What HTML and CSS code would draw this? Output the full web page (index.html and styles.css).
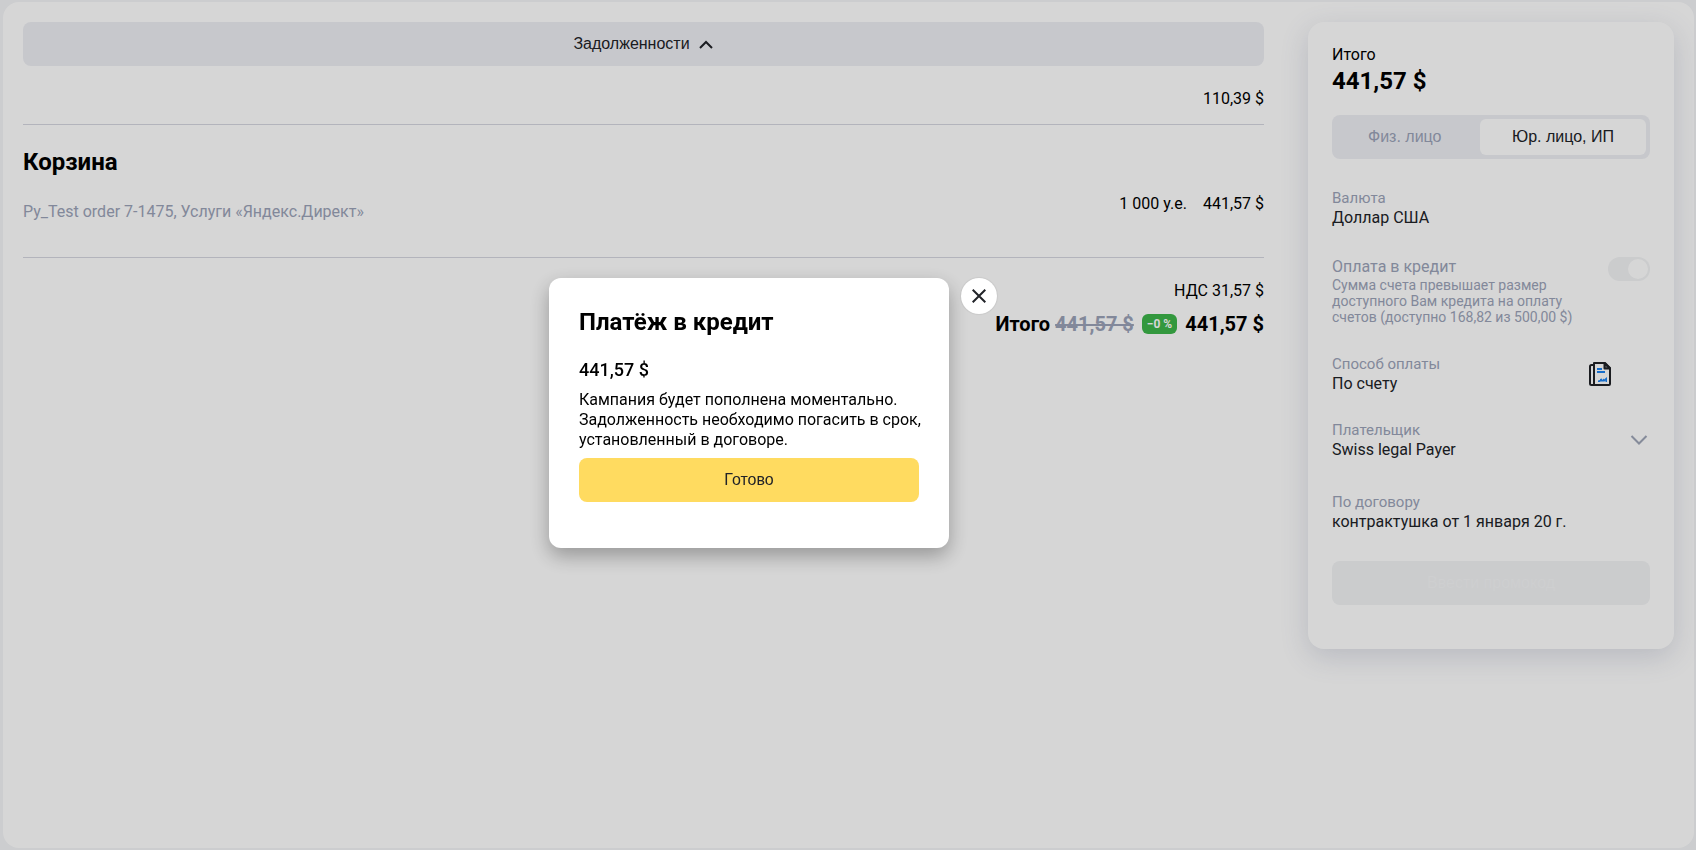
FILE: index.html
```html
<!DOCTYPE html>
<html lang="ru">
<head>
<meta charset="utf-8">
<title>Корзина</title>
<link rel="stylesheet" href="styles.css">
</head>
<body>
<div class="page">
  <main class="cart">
    <button class="debts" type="button">
      <span>Задолженности</span>
      <svg class="debts-icon" width="16" height="16" viewBox="0 0 16 16" fill="none" stroke="currentColor" stroke-width="2"><path d="M2 12l6-6 6 6"/></svg>
    </button>
    <div class="debt-sum">110,39&nbsp;$</div>
    <h1 class="title">Корзина</h1>
    <div class="item">
      <div class="item-name">Py_Test order 7-1475, Услуги «Яндекс.Директ»</div>
      <div class="item-prices"><span>1&nbsp;000&nbsp;у.е.</span><span>441,57&nbsp;$</span></div>
    </div>
    <div class="vat">НДС 31,57&nbsp;$</div>
    <div class="total">
      <span>Итого <s class="old">441,57&nbsp;$</s></span>
      <span class="badge">−0&nbsp;%</span>
      <span>441,57&nbsp;$</span>
    </div>
  </main>

  <aside class="card">
    <div class="card-label">Итого</div>
    <div class="card-sum">441,57&nbsp;$</div>
    <div class="segments" role="radiogroup" aria-label="Тип плательщика">
      <label class="segment"><input class="hidden-radio" type="radio" name="person">Физ. лицо</label>
      <label class="segment segment-active"><input class="hidden-radio" type="radio" name="person" checked>Юр. лицо, ИП</label>
    </div>
    <div class="field">
      <div class="field-label">Валюта</div>
      <div class="field-value">Доллар США</div>
    </div>
    <div class="field credit">
      <div>
        <label class="credit-label" for="credit">Оплата в кредит</label>
        <div class="credit-note">Сумма счета превышает размер доступного Вам кредита на оплату счетов (доступно 168,82 из 500,00&nbsp;$)</div>
      </div>
      <input class="switch" id="credit" type="checkbox" checked disabled>
    </div>
    <div class="field field-row">
      <div>
        <div class="field-label">Способ оплаты</div>
        <div class="field-value">По счету</div>
      </div>
      <svg class="invoice" width="24" height="24" viewBox="0 0 24 24" fill="none" stroke="#212328" stroke-width="2" stroke-linejoin="round">
        <path d="M6 3H3.500Q2 3 2 4.500V21.500Q2 23 3.500 23H7"/>
        <path d="M6 1H17L22 6V22Q22 23 21 23H6Z"/>
        <path d="M16.500 1V6.500H22Z" fill="#777b82"/>
        <path d="M9 7H14M9 10H17" stroke="#1c84f2"/>
        <path d="M10 20V18.500L12 18V17L14 16.500V18L16 16.500V17.500L19 15V20H17.500V18.500L16.500 19.500H12.500L11.500 20Z" fill="#1c84f2" stroke="none"/>
      </svg>
    </div>
    <div class="field field-row payer">
      <div>
        <div class="field-label">Плательщик</div>
        <div class="field-value">Swiss legal Payer</div>
      </div>
      <svg class="chevron" width="20" height="20" viewBox="0 0 20 20" fill="none" stroke="#9fa6b8" stroke-width="2"><path d="M2.500 6l7.500 7.500L17.500 6"/></svg>
    </div>
    <div class="field contract">
      <div class="field-label">По договору</div>
      <div class="field-value">контрактушка от 1 января 20 г.</div>
    </div>
    <button class="promo" type="button" disabled>Ввести промокод</button>
  </aside>
</div>

<div class="overlay">
  <section class="modal" role="dialog" aria-labelledby="modal-title">
    <h2 class="modal-title" id="modal-title">Платёж в кредит</h2>
    <div class="modal-sum">441,57&nbsp;$</div>
    <p class="modal-text">Кампания будет пополнена моментально.<br>Задолженность необходимо погасить в срок,<br>установленный в договоре.</p>
    <button class="done" type="button">Готово</button>
  </section>
  <button class="close" type="button" aria-label="Закрыть">
    <svg width="14" height="14" viewBox="0 0 14 14" fill="none" stroke="#212328" stroke-width="2"><path d="M.700 .700l12.600 12.600M13.300 .700L.700 13.300"/></svg>
  </button>
</div>
</body>
</html>
```
FILE: styles.css
```css
* { box-sizing: border-box; }

body {
  display: flex;
  min-height: 100vh;
  margin: 0;
  padding: 2px 2px 2px 3px;
  background: #f4f5f7;
  color: #000;
  font: 16px/20px Roboto, "Noto Sans", sans-serif;
}

button {
  border: 0;
  border-radius: 8px;
  color: #212328;
  font: 16px/20px "Liberation Sans", Arial, sans-serif;
}

.page {
  display: flex;
  flex: 1;
  align-items: flex-start;
  gap: 44px;
  padding: 20px;
  border-radius: 16px;
  background: #fff;
}

.cart { flex: 1; }

.debts {
  display: flex;
  align-items: center;
  justify-content: center;
  gap: 8px;
  width: 100%;
  height: 44px;
  background: #eeeff4;
}

.debt-sum {
  padding: 23px 0 15px;
  border-bottom: 1px solid #d6d7e0;
  text-align: right;
}

.title {
  margin: 23px 0 0;
  font-size: 24px;
  line-height: 28px;
}

.item {
  display: flex;
  justify-content: space-between;
  padding: 18px 0 35px;
  border-bottom: 1px solid #d6d7e0;
}

.item-name {
  padding-top: 8px;
  color: #9ba3b8;
}

.item-prices {
  display: flex;
  gap: 16px;
}

.vat {
  margin-top: 23px;
  text-align: right;
}

.total {
  display: flex;
  align-items: center;
  justify-content: flex-end;
  gap: 8px;
  margin-top: 11px;
  font-size: 20px;
  font-weight: 700;
  line-height: 24px;
}

.old { color: #9ba3b8; }

.badge {
  padding: 0 5px;
  border-radius: 6px;
  background: #3db64b;
  color: #fff;
  font-size: 12px;
  font-weight: 700;
  line-height: 20px;
}

.card {
  width: 366px;
  padding: 23px 24px 44px;
  border-radius: 16px;
  background: #fff;
  box-shadow: 0 8px 28px rgba(80, 90, 130, .2);
}

.card-sum {
  font-size: 24px;
  font-weight: 700;
  line-height: 32px;
}

.segments {
  display: flex;
  justify-content: space-between;
  margin-top: 18px;
  padding: 4px;
  border-radius: 8px;
  background: #eeeff4;
  font-family: "Liberation Sans", Arial, sans-serif;
}

.segment {
  padding: 8px 32px;
  border-radius: 6px;
  color: #9ba3b8;
}

.segment-active {
  background: #fff;
  color: #212328;
}

.hidden-radio {
  position: absolute;
  opacity: 0;
}

.field { margin-top: 29px; }

.field-label {
  color: #9ba3b8;
  font-size: 15px;
}

.field-value { color: #212328; }

.credit {
  display: flex;
  justify-content: space-between;
  align-items: flex-start;
  gap: 24px;
  color: #9ba3b8;
}

.credit-label { display: block; }

.credit-note {
  font-size: 14px;
  line-height: 16px;
}

.switch {
  display: flex;
  flex: none;
  justify-content: flex-end;
  width: 42px;
  height: 24px;
  margin: 0;
  padding: 2px;
  border-radius: 12px;
  background: #f2f3f5;
  appearance: none;
}

.switch::before {
  width: 20px;
  height: 20px;
  border-radius: 50%;
  background: #fff;
  content: "";
}

.field-row {
  display: flex;
  align-items: center;
  justify-content: space-between;
}

.invoice { margin-right: 38px; }

.payer { margin-top: 26px; }

.chevron { margin-right: 1px; }

.contract { margin-top: 32px; }

.promo {
  width: 100%;
  height: 44px;
  margin-top: 29px;
  background: #f2f3f5;
  color: #f6f7f8;
}

.overlay {
  position: fixed;
  inset: 0;
  display: flex;
  align-items: center;
  justify-content: center;
  gap: 12px;
  padding: 0 150px 24px 0;
  background: rgba(0, 0, 0, .16);
}

.modal {
  width: 400px;
  padding: 30px 30px 46px;
  border-radius: 12px;
  background: #fff;
  box-shadow: 0 8px 20px rgba(0, 0, 0, .3);
}

.modal-title {
  margin: 0;
  font-size: 24px;
  line-height: 28px;
}

.modal-sum {
  margin-top: 22px;
  font-size: 18px;
  font-weight: 500;
  line-height: 24px;
}

.modal-text {
  margin: 8px 0;
  white-space: nowrap;
}

.done {
  width: 100%;
  height: 44px;
  background: #ffdb60;
}

.close {
  display: flex;
  align-items: center;
  align-self: flex-start;
  justify-content: center;
  width: 36px;
  height: 36px;
  margin-top: calc(50vh - 147px);
  padding: 0;
  border-radius: 50%;
  background: #fff;
  box-shadow: 0 0 2px rgba(0, 0, 0, .2);
}
```
